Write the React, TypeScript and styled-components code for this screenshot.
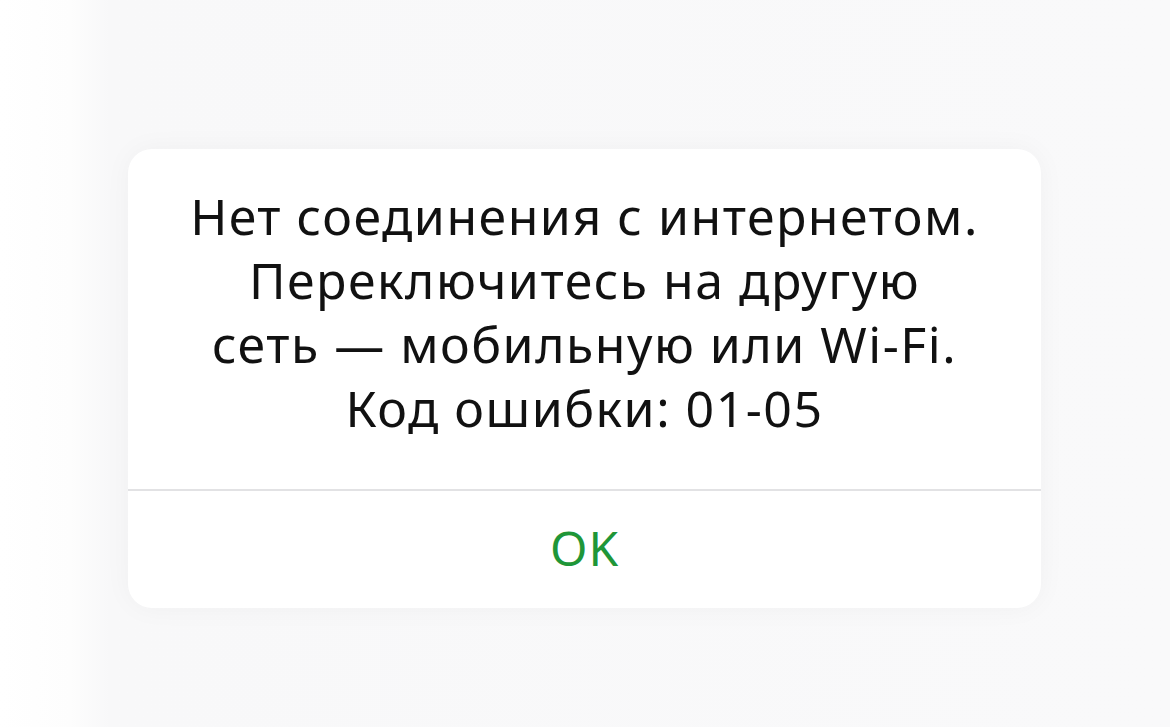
import React from 'react';
import styled, {createGlobalStyle} from 'styled-components';

const GlobalStyle = createGlobalStyle`
  html, body {
    margin: 0;
    padding: 0;
    background: #ffffff;
  }
  #root {
    min-height: 100vh;
  }
`;

const Backdrop = styled.div`
  width: 1170px;
  height: 727px;
  box-sizing: border-box;
  padding: 149px 129px 0 128px;
  background: linear-gradient(to right, #ffffff 0, #fdfdfd 70px, #f8f8f9 110px, #f9f9fa 100%);
  overflow: hidden;
`;

const Dialog = styled.div`
  width: 913px;
  height: 459px;
  display: flex;
  flex-direction: column;
  background: #ffffff;
  border-radius: 24px;
  box-shadow: 0 0 28px rgba(0, 0, 0, 0.04);
  overflow: hidden;
`;

const Message = styled.p`
  flex: 0 0 auto;
  margin: 0;
  padding: 35px 20px 0;
  height: 342px;
  box-sizing: border-box;
  font-family: 'Noto Sans', 'Open Sans', sans-serif;
  font-size: 50px;
  line-height: 64px;
  letter-spacing: 1.5px;
  color: #111111;
  text-align: center;
  border-bottom: 2px solid #e2e2e4;
`;

const Line = styled.span`
  display: block;
`;

const Action = styled.button`
  flex: 1;
  border: none;
  background: transparent;
  font-family: 'Noto Sans', 'Open Sans', sans-serif;
  font-size: 48px;
  letter-spacing: 1px;
  color: #1f9638;
  cursor: pointer;
  padding: 0 0 4px;
`;

const lines = [
  'Нет соединения с интернетом.',
  'Переключитесь на другую',
  'сеть — мобильную или Wi-Fi.',
  'Код ошибки: 01-05',
];

function App() {
  return (
    <>
      <GlobalStyle />
      <Backdrop>
        <Dialog>
          <Message>
            {lines.map((line) => (
              <Line key={line}>{line}</Line>
            ))}
          </Message>
          <Action>OK</Action>
        </Dialog>
      </Backdrop>
    </>
  );
}

export default App;
